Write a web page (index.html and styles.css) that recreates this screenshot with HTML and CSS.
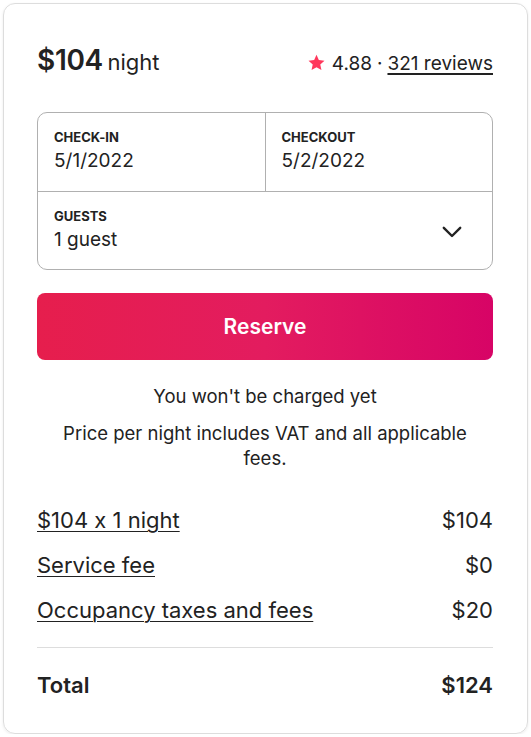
FILE: index.html
```html
<!DOCTYPE html>
<html>
<head>
<meta charset="utf-8">
<link rel="stylesheet" href="styles.css">
</head>
<body>
<div class="card">
  <div class="head">
    <div class="price"><span class="amount">$104</span> <span class="unit">night</span></div>
    <div class="rating">
      <svg class="star" viewBox="0 0 32 32" width="17" height="17"><path d="M16 1.6l4.4 9.7 10.6 1.2-7.9 7.2 2.2 10.4L16 24.8l-9.3 5.3 2.2-10.4L1 12.5l10.6-1.2z" fill="#ff385c"/></svg>
      <span>4.88</span><span class="dot">·</span><a class="reviews">321 reviews</a>
    </div>
  </div>
  <div class="picker">
    <div class="dates">
      <div class="cell left">
        <div class="label">CHECK-IN</div>
        <div class="value">5/1/2022</div>
      </div>
      <div class="cell">
        <div class="label">CHECKOUT</div>
        <div class="value">5/2/2022</div>
      </div>
    </div>
    <div class="guests">
      <div>
        <div class="label">GUESTS</div>
        <div class="value">1 guest</div>
      </div>
      <svg class="chev" viewBox="0 0 20 12" width="20" height="12"><path d="M1.8 1.8L10 10 18.2 1.8" fill="none" stroke="#222" stroke-width="2.4" stroke-linecap="round" stroke-linejoin="round"/></svg>
    </div>
  </div>
  <button class="reserve">Reserve</button>
  <p class="note">You won't be charged yet</p>
  <p class="note vat">Price per night includes VAT and all applicable fees.</p>
  <div class="lines">
    <div class="line"><a>$104 x 1 night</a><span>$104</span></div>
    <div class="line"><a>Service fee</a><span>$0</span></div>
    <div class="line"><a>Occupancy taxes and fees</a><span>$20</span></div>
  </div>
  <div class="total"><span>Total</span><span>$124</span></div>
</div>
</body>
</html>
```
FILE: styles.css
```css
* { box-sizing: border-box; }
html, body { margin: 0; background: #fff; }
body {
  font-family: Inter, "Noto Sans", sans-serif;
  font-feature-settings: "calt" 0;
  color: #222;
  padding: 3px 3px 0 3px;
}
.card {
  border: 1px solid #dddddd;
  border-radius: 12px;
  box-shadow: 0 1px 3px rgba(0,0,0,0.08);
  padding: 38px 34px 0 33px;
  height: 731px;
}
.head {
  display: flex;
  justify-content: space-between;
  align-items: baseline;
  line-height: 36px;
  height: 36px;
}
.amount { font-size: 28px; font-weight: 600; letter-spacing: -0.3px; }
.unit { font-size: 22px; font-weight: 400; }
.rating {
  display: flex;
  align-items: baseline;
  font-size: 19px;
  gap: 5px;
}
.star { align-self: center; margin-right: 2px; margin-top: -3px; }
.reviews { text-decoration: underline; text-underline-offset: 3px; text-decoration-thickness: 1.5px; }
.picker {
  margin-top: 34px;
  border: 1px solid #b0b0b0;
  border-radius: 10px;
}
.dates {
  display: flex;
  border-bottom: 1px solid #b0b0b0;
}
.cell { flex: 1; padding: 16px 16px 18px 16px; }
.cell.left { border-right: 1px solid #b0b0b0; }
.label { font-size: 13px; font-weight: 700; line-height: 16px; }
.value { font-size: 19px; line-height: 24px; margin-top: 4px; }
.guests {
  display: flex;
  justify-content: space-between;
  align-items: center;
  padding: 16px 30px 17px 16px;
}
.chev { margin-top: 3px; }
.reserve {
  display: block;
  width: 100%;
  margin-top: 23px;
  height: 67px;
  border: none;
  border-radius: 8px;
  background: linear-gradient(to right, #e61e4d 0%, #e31c5f 50%, #d70466 100%);
  color: #fff;
  font-family: inherit;
  font-size: 21px;
  font-weight: 600;
}
.note {
  text-align: center;
  font-size: 18.5px;
  line-height: 26px;
  margin: 23px 0 0 0;
}
.note.vat { margin-top: 12px; line-height: 25px; padding: 0 12px; }
.lines {
  display: flex;
  flex-direction: column;
  gap: 15px;
  margin-top: 34px;
  padding-bottom: 22px;
  border-bottom: 1px solid #dddddd;
}
.line {
  display: flex;
  justify-content: space-between;
  font-size: 22px;
  line-height: 30px;
}
.line a { text-decoration: underline; text-underline-offset: 3px; text-decoration-thickness: 1px; }
.total {
  display: flex;
  justify-content: space-between;
  font-size: 22px;
  line-height: 30px;
  font-weight: 600;
  margin-top: 22px;
}
```
